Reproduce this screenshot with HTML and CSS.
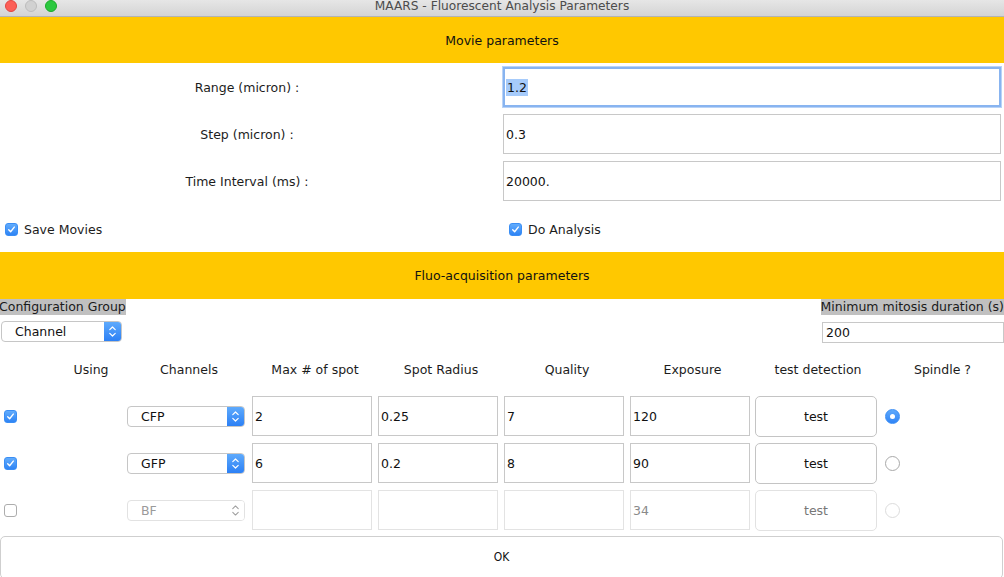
FILE: index.html
```html
<!DOCTYPE html>
<html>
<head>
<meta charset="utf-8">
<link rel="stylesheet" href="styles.css">
</head>
<body>
<div class="window">
  <div class="titlebar">
    <div class="lights">
      <span class="light red"></span>
      <span class="light gray"></span>
      <span class="light green"></span>
    </div>
    <div class="title">MAARS - Fluorescent Analysis Parameters</div>
  </div>

  <div class="band band1">Movie parameters</div>

  <div class="form">
    <div class="frow">
      <div class="flabel">Range (micron) :</div>
      <div class="field focused"><span class="sel">1.2</span></div>
    </div>
    <div class="frow">
      <div class="flabel">Step (micron) :</div>
      <div class="field">0.3</div>
    </div>
    <div class="frow">
      <div class="flabel">Time Interval (ms) :</div>
      <div class="field">20000.</div>
    </div>
  </div>

  <div class="checkrow">
    <div class="citem"><span class="cb on"><svg viewBox="0 0 13 13"><path d="M3.2 6.8 L5.5 9.2 L9.8 3.6" fill="none" stroke="#fff" stroke-width="1.6" stroke-linecap="round" stroke-linejoin="round"/></svg></span><span>Save Movies</span></div>
    <div class="citem"><span class="cb on"><svg viewBox="0 0 13 13"><path d="M3.2 6.8 L5.5 9.2 L9.8 3.6" fill="none" stroke="#fff" stroke-width="1.6" stroke-linecap="round" stroke-linejoin="round"/></svg></span><span>Do Analysis</span></div>
  </div>

  <div class="band band2">Fluo-acquisition parameters</div>

  <div class="config">
    <div class="crow1">
      <span class="glabel">Configuration Group</span>
      <span class="glabel">Minimum mitosis duration (s)</span>
    </div>
    <div class="crow2">
      <div class="combo wide">
        <span class="ctext">Channel</span>
        <span class="carrow"><svg viewBox="0 0 17 21"><path d="M5.5 8.5 L8.5 5.5 L11.5 8.5 M5.5 12.5 L8.5 15.5 L11.5 12.5" fill="none" stroke="#fff" stroke-width="1.3" stroke-linecap="round" stroke-linejoin="round"/></svg></span>
      </div>
      <div class="field small">200</div>
    </div>
  </div>

  <div class="grid">
    <div class="hcell using">Using</div>
    <div class="hcell">Channels</div>
    <div class="hcell">Max # of spot</div>
    <div class="hcell">Spot Radius</div>
    <div class="hcell">Quality</div>
    <div class="hcell">Exposure</div>
    <div class="hcell">test detection</div>
    <div class="hcell">Spindle ?</div>

    <div class="cell"><span class="cb on"><svg viewBox="0 0 13 13"><path d="M3.2 6.8 L5.5 9.2 L9.8 3.6" fill="none" stroke="#fff" stroke-width="1.6" stroke-linecap="round" stroke-linejoin="round"/></svg></span></div>
    <div class="cell"><div class="combo ch"><span class="ctext">CFP</span><span class="carrow"><svg viewBox="0 0 17 21"><path d="M5.5 8.5 L8.5 5.5 L11.5 8.5 M5.5 12.5 L8.5 15.5 L11.5 12.5" fill="none" stroke="#fff" stroke-width="1.3" stroke-linecap="round" stroke-linejoin="round"/></svg></span></div></div>
    <div class="cell"><div class="field cf">2</div></div>
    <div class="cell"><div class="field cf">0.25</div></div>
    <div class="cell"><div class="field cf">7</div></div>
    <div class="cell"><div class="field cf">120</div></div>
    <div class="cell"><div class="btn">test</div></div>
    <div class="cell"><span class="radio on"></span></div>

    <div class="cell"><span class="cb on"><svg viewBox="0 0 13 13"><path d="M3.2 6.8 L5.5 9.2 L9.8 3.6" fill="none" stroke="#fff" stroke-width="1.6" stroke-linecap="round" stroke-linejoin="round"/></svg></span></div>
    <div class="cell"><div class="combo ch"><span class="ctext">GFP</span><span class="carrow"><svg viewBox="0 0 17 21"><path d="M5.5 8.5 L8.5 5.5 L11.5 8.5 M5.5 12.5 L8.5 15.5 L11.5 12.5" fill="none" stroke="#fff" stroke-width="1.3" stroke-linecap="round" stroke-linejoin="round"/></svg></span></div></div>
    <div class="cell"><div class="field cf">6</div></div>
    <div class="cell"><div class="field cf">0.2</div></div>
    <div class="cell"><div class="field cf">8</div></div>
    <div class="cell"><div class="field cf">90</div></div>
    <div class="cell"><div class="btn">test</div></div>
    <div class="cell"><span class="radio"></span></div>

    <div class="cell"><span class="cb"></span></div>
    <div class="cell"><div class="combo ch dis"><span class="ctext">BF</span><span class="carrow"><svg viewBox="0 0 17 21"><path d="M5.5 8.5 L8.5 5.5 L11.5 8.5 M5.5 12.5 L8.5 15.5 L11.5 12.5" fill="none" stroke="#a0a0a0" stroke-width="1.2" stroke-linecap="round" stroke-linejoin="round"/></svg></span></div></div>
    <div class="cell"><div class="field cf dis"></div></div>
    <div class="cell"><div class="field cf dis"></div></div>
    <div class="cell"><div class="field cf dis"></div></div>
    <div class="cell"><div class="field cf dis">34</div></div>
    <div class="cell"><div class="btn dis">test</div></div>
    <div class="cell"><span class="radio dis"></span></div>
  </div>

  <div class="okwrap"><div class="okbtn">OK</div></div>
</div>
</body>
</html>
```

FILE: styles.css
```css
* { box-sizing: border-box; }
html, body {
  margin: 0;
  padding: 0;
  background: #ffffff;
}
body {
  font-family: "DejaVu Sans", "Noto Sans", sans-serif;
  font-size: 12.5px;
  color: #1c1c1c;
  width: 1004px;
  height: 577px;
  overflow: hidden;
}
.window {
  display: flex;
  flex-direction: column;
  width: 1004px;
  height: 577px;
}

/* Title bar */
.titlebar {
  position: relative;
  height: 17px;
  flex: none;
  background: linear-gradient(#e6e6e6, #d4d4d4);
  border-bottom: 1px solid #b3b3b3;
  display: flex;
  justify-content: center;
  align-items: center;
}
.lights {
  position: absolute;
  left: 5px;
  top: 0;
  display: flex;
  gap: 8px;
}
.light {
  width: 12px;
  height: 12px;
  border-radius: 50%;
  display: block;
}
.light.red { background: #fc5f57; border: 1px solid #e2463f; }
.light.gray { background: #d1d1d1; border: 1px solid #bcbcbc; }
.light.green { background: #2cc840; border: 1px solid #1aab29; }
.title {
  font-size: 12.2px;
  color: #4c4c4c;
  margin-top: -4px;
  line-height: 14px;
}

/* Bands */
.band {
  flex: none;
  background: #ffc800;
  display: flex;
  justify-content: center;
  align-items: center;
  color: #111;
  font-size: 12.5px;
}
.band1 { height: 46px; }
.band2 { height: 47px; }

/* Movie form */
.form {
  display: flex;
  flex-direction: column;
  gap: 7px;
  padding-top: 4px;
}
.frow {
  display: flex;
  height: 40px;
  align-items: center;
}
.flabel {
  width: 494px;
  margin-right: 9px;
  text-align: center;
}
.field {
  border: 1px solid #c8c8c8;
  background: #fff;
  display: flex;
  align-items: center;
  padding-left: 2px;
  color: #111;
}
.frow .field {
  width: 498px;
  height: 40px;
}
.field.focused {
  border: 2px solid #88b4f0;
  box-shadow: 0 0 0 1px #b9d3f7;
  padding-left: 1px;
}
.sel {
  background: #a6cbfb;
  padding: 1px 1px;
}

/* Checkbox row */
.checkrow {
  height: 51px;
  flex: none;
  display: grid;
  grid-template-columns: 504px 500px;
  align-items: center;
  padding-top: 5px;
}
.citem {
  display: flex;
  align-items: center;
  gap: 6px;
  padding-left: 5px;
}
.cb {
  width: 13px;
  height: 13px;
  border-radius: 3px;
  border: 1px solid #adadad;
  background: #fff;
  display: block;
  flex: none;
}
.cb.on {
  border: 1px solid #3a8ef5;
  background: linear-gradient(#62acfc, #2e84f5);
}
.cb svg { display: block; width: 11px; height: 11px; }

/* Config area */
.config {
  flex: none;
  height: 44px;
  display: flex;
  flex-direction: column;
}
.crow1 {
  display: flex;
  justify-content: space-between;
  height: 16px;
}
.glabel {
  background: #c0c0c0;
  line-height: 16px;
  height: 16px;
  color: #1a1a1a;
  white-space: nowrap;
}
.crow1 .glabel:first-child { margin-left: -1px; }
.crow2 {
  display: flex;
  justify-content: space-between;
  align-items: flex-start;
  padding-top: 6px;
  padding-left: 1px;
}
.combo {
  display: flex;
  height: 21px;
  border: 1px solid #c6c6c6;
  border-radius: 4px;
  background: #fff;
  overflow: hidden;
  align-items: stretch;
}
.combo.wide { width: 121px; }
.ctext {
  flex: 1;
  display: flex;
  align-items: center;
  padding-left: 13px;
  color: #111;
}
.carrow {
  width: 17px;
  flex: none;
  background: linear-gradient(#5eaafc, #2c80f5);
  display: flex;
}
.carrow svg { width: 17px; height: 19px; display: block; }
.combo.dis { border-color: #e2e2e2; }
.combo.dis .ctext { color: #9a9a9a; }
.combo.dis .carrow { background: #fff; }
.field.small {
  width: 182px;
  height: 21px;
  margin-top: 1px;
  padding-left: 3px;
}

/* Grid */
.grid {
  display: grid;
  grid-template-columns: 126px 126px 126px 126px 126px 125px 126px 1fr;
  grid-template-rows: 46px 40px 40px 40px;
  row-gap: 7px;
  flex: none;
}
.hcell {
  display: flex;
  align-items: center;
  justify-content: center;
  color: #1c1c1c;
  padding-top: 6px;
}
.hcell.using { padding-left: 56px; }
.cell {
  display: flex;
  align-items: center;
}
.cell .cb { margin-left: 4px; }
.combo.ch {
  width: 118px;
  margin-left: 1px;
}
.field.cf {
  width: 120px;
  height: 40px;
}
.field.dis {
  border-color: #e3e3e3;
  color: #8a8a8a;
}
.btn {
  width: 122px;
  height: 41px;
  border: 1px solid #c4c4c4;
  border-radius: 5px;
  background: #fff;
  display: flex;
  align-items: center;
  justify-content: center;
  color: #111;
}
.btn.dis { border-color: #e2e2e2; color: #777; }
.radio {
  width: 15px;
  height: 15px;
  border-radius: 50%;
  border: 1px solid #a9a9a9;
  background: #fff;
  display: block;
  margin-left: 4px;
  margin-top: 1px;
  position: relative;
}
.radio.on {
  border: 1px solid #3a8ef5;
  background: linear-gradient(#5ea9fc, #2f84f6);
}
.radio.on::after {
  content: "";
  position: absolute;
  left: 4px;
  top: 4px;
  width: 5px;
  height: 5px;
  border-radius: 50%;
  background: #fff;
}
.radio.dis { border-color: #dcdcdc; }

/* OK */
.okwrap {
  padding-top: 6px;
  flex: none;
}
.okbtn {
  width: 1003px;
  height: 43px;
  border: 1px solid #cfcfcf;
  border-radius: 5px;
  display: flex;
  align-items: center;
  justify-content: center;
  font-family: "DejaVu Sans Condensed", "DejaVu Sans", sans-serif;
  font-size: 12px;
  color: #111;
  padding-bottom: 2px;
}
```
